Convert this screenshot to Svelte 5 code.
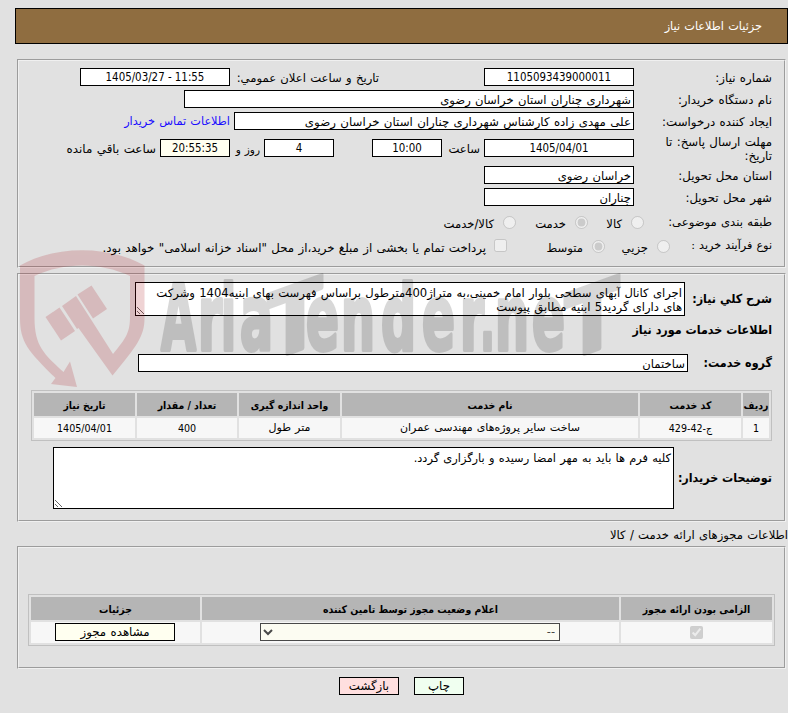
<script lang="ts">
	const services = [
		{
			row: "1",
			code: "ج-42-429",
			name: "ساخت سایر پروژه‌های مهندسی عمران",
			unit: "متر طول",
			amount: "400",
			date: "1405/04/01",
		},
	];

	let description = $state(
		"اجرای کانال آبهای سطحی بلوار امام خمینی،به متراژ400مترطول براساس فهرست بهای ابنیه1404 وشرکت\nهای دارای گردید5 ابنیه مطابق پیوست",
	);
	let buyerNotes = $state(
		"کلیه فرم ها باید به مهر امضا رسیده و بارگزاری گردد.",
	);

	// left edge and width of every letter of the watermark
	const letters = [
		["A", 161, 35],
		["r", 198, 24],
		["i", 221, 15],
		["a", 240, 33],
		["e", 306, 33],
		["n", 341, 34],
		["d", 381, 35],
		["e", 422, 33],
		["r", 460, 24],
		[".", 480, 15],
		["n", 495, 34],
		["e", 532, 33],
	] as const;
</script>

<div class="page" dir="rtl">
	<header>جزئیات اطلاعات نیاز</header>

	<fieldset class="need">
		<div class="row">
			<label for="number">شماره نیاز:</label>
			<input id="number" class="num w150" value="1105093439000011" readonly />
			<span class="text announce">تاریخ و ساعت اعلان عمومي:</span>
			<input class="num w150" value="1405/03/27 - 11:55" readonly dir="ltr" />
		</div>
		<div class="row">
			<label for="buyer">نام دستگاه خریدار:</label>
			<input id="buyer" class="w450" value="شهرداری چناران استان خراسان رضوی" readonly />
		</div>
		<div class="row">
			<label for="creator">ایجاد کننده درخواست:</label>
			<input
				id="creator"
				class="w400"
				value="علی مهدی زاده کارشناس شهرداری چناران استان خراسان رضوی"
				readonly
			/>
			<a href="#contact">اطلاعات تماس خریدار</a>
		</div>
		<div class="row deadline">
			<label for="deadline">مهلت ارسال پاسخ: تا تاریخ:</label>
			<input id="deadline" class="num w150" value="1405/04/01" readonly />
			<span class="text hour">ساعت</span>
			<input class="num w70" value="10:00" readonly />
			<input class="num w70 days" value="4" readonly />
			<span class="text and">روز و</span>
			<input class="num w70 timer" value="20:55:35" readonly />
			<span class="text left">ساعت باقي مانده</span>
		</div>
		<div class="row">
			<label for="province">استان محل تحویل:</label>
			<input id="province" class="w150" value="خراسان رضوی" readonly />
		</div>
		<div class="row">
			<label for="city">شهر محل تحویل:</label>
			<input id="city" class="w150" value="چناران" readonly />
		</div>
		<div class="row options subject">
			<span class="label">طبقه بندی موضوعی:</span>
			<input type="radio" name="subject" disabled />
			<span class="opt goods">کالا</span>
			<input type="radio" name="subject" checked disabled />
			<span class="opt service">خدمت</span>
			<input type="radio" name="subject" disabled />
			<span class="opt">کالا/خدمت</span>
		</div>
		<div class="row options process">
			<span class="label">نوع فرآیند خرید :</span>
			<input type="radio" name="process" disabled />
			<span class="opt small">جزیي</span>
			<input type="radio" name="process" checked disabled />
			<span class="opt medium">متوسط</span>
			<input type="checkbox" disabled />
			<span class="opt treasury">
				پرداخت تمام یا بخشی از مبلغ خرید،از محل "اسناد خزانه اسلامی" خواهد بود.
			</span>
		</div>
	</fieldset>

	<fieldset class="details">
		<div class="field">
			<label for="description">شرح کلي نیاز:</label>
			<textarea id="description" class="description" bind:value={description}></textarea>
		</div>
		<h2>اطلاعات خدمات مورد نیاز</h2>
		<div class="field group">
			<label for="group">گروه خدمت:</label>
			<input id="group" value="ساختمان" readonly />
		</div>
		<table class="services">
			<colgroup>
				<col class="c-row" />
				<col class="c-code" />
				<col />
				<col class="c-unit" />
				<col class="c-amount" />
				<col class="c-date" />
			</colgroup>
			<thead>
				<tr>
					<th>ردیف</th>
					<th>کد خدمت</th>
					<th>نام خدمت</th>
					<th>واحد اندازه گیری</th>
					<th>تعداد / مقدار</th>
					<th>تاریخ نیاز</th>
				</tr>
			</thead>
			<tbody>
				{#each services as s}
					<tr>
						<td class="num">{s.row}</td>
						<td class="num">{s.code}</td>
						<td>{s.name}</td>
						<td>{s.unit}</td>
						<td class="num">{s.amount}</td>
						<td class="num">{s.date}</td>
					</tr>
				{/each}
			</tbody>
		</table>
		<div class="field notes">
			<label for="notes">توضیحات خریدار:</label>
			<textarea id="notes" bind:value={buyerNotes}></textarea>
		</div>
	</fieldset>

	<p class="caption">اطلاعات مجوزهای ارائه خدمت / کالا</p>

	<fieldset class="permits">
		<table>
			<colgroup>
				<col class="c-required" />
				<col />
				<col class="c-view" />
			</colgroup>
			<thead>
				<tr>
					<th>الزامی بودن ارائه مجوز</th>
					<th>اعلام وضعیت مجوز توسط تامین کننده</th>
					<th>جزئیات</th>
				</tr>
			</thead>
			<tbody>
				<tr>
					<td><input type="checkbox" checked disabled /></td>
					<td>
						<select disabled>
							<option>--</option>
						</select>
					</td>
					<td><button class="view">مشاهده مجوز</button></td>
				</tr>
			</tbody>
		</table>
	</fieldset>

	<div class="actions">
		<button class="print">چاپ</button>
		<button class="back">بازگشت</button>
	</div>

	<svg class="watermark" width="788" height="713" viewBox="0 0 788 713" aria-hidden="true">
		<g class="shield">
			<path
				d="M20 265.500C56 245 108 245 144.500 265.500V318C144.500 336 137 346 112.500 375.500L78.500 328L77 329L62 306L76 296L92 321L113 354C127 337 130 332 130 316V276C100 262 64 262 34.500 276V318C34.500 346 44 354 63.500 372L70 361.500L77 387L51 384L55.500 378C28 351 20 342 20 318Z"
			/>
			<path d="M45.500 317L59.500 307.500L75 331L61 340.500ZM77.500 294.500L91.500 285.500L107 309L93 318.500Z" />
		</g>
		<g class="brand">
			{#each letters as [ch, x, w]}
				<text {x} y="350" textLength={w} lengthAdjust="spacingAndGlyphs">{ch}</text>
			{/each}
			<text transform="translate(268 361) skewY(-20)" textLength="54" lengthAdjust="spacingAndGlyphs">T</text>
			<text transform="translate(565 361) skewY(-20)" textLength="54" lengthAdjust="spacingAndGlyphs">T</text>
		</g>
	</svg>
</div>

<style>
	:global(body) {
		background: #e1e1e1;
	}

	.page {
		position: relative;
		box-sizing: border-box;
		width: 788px;
		height: 713px;
		padding-top: 8px;
		overflow: hidden;
		background: #e1e1e1;
		color: #000;
		font: 11.6px/14px "DejaVu Sans", sans-serif;
		word-spacing: 0.6px;
	}

	header {
		box-sizing: border-box;
		height: 36px;
		margin-left: 15px;
		padding-right: 25px;
		border: 1px solid #000;
		background: #8f6d40;
		color: #fff;
		font-size: 11.3px;
		line-height: 36px;
	}

	fieldset {
		box-sizing: border-box;
		width: 769px;
		margin: 0 2px 0 0;
		padding: 0 12px 0 0;
		border: 2px groove #f0f0f0;
	}

	input,
	textarea,
	select,
	button {
		box-sizing: border-box;
		margin: 0;
		border: 1px solid #000;
		border-radius: 0;
		background: #fff;
		color: #000;
		font: inherit;
		word-spacing: inherit;
	}
	input:not([type]) {
		height: 18px;
		padding: 2px 2px 0;
	}
	input[type="radio"],
	input[type="checkbox"] {
		flex: none;
		width: 13px;
		height: 13px;
	}
	input.num {
		padding: 1px 2px;
		font-family: "DejaVu Sans Condensed", "DejaVu Sans", sans-serif;
		font-size: 11.4px;
		text-align: center;
		word-spacing: 0;
	}

	.need {
		height: 209px;
		margin-top: 15px;
		padding-top: 7px;
	}
	.row {
		display: flex;
		align-items: center;
		height: 18px;
		margin-bottom: 4px;
		white-space: nowrap;
	}
	.row label,
	.label {
		flex: none;
		width: 138px;
	}
	.row > label {
		font-size: 11.8px;
	}
	.row > label,
	.row > a,
	.text {
		padding-top: 1px;
	}
	.row.deadline {
		height: 28px;
		margin: 5px 0 3px;
	}
	.deadline label {
		box-sizing: border-box;
		padding: 0 0 0 22px;
		white-space: normal;
	}
	.deadline input,
	.deadline .text {
		margin-bottom: 2px;
	}
	.w70 {
		width: 70px;
	}
	.w150 {
		width: 150px;
	}
	.w400 {
		width: 400px;
	}
	#creator {
		font-size: 11.8px;
	}
	.w450 {
		width: 450px;
	}
	.text {
		flex: none;
	}
	.announce {
		width: 149px;
		margin-right: 105px;
	}
	.hour {
		width: 38px;
		margin-right: 4px;
	}
	.days {
		margin-right: 38px;
	}
	.and {
		width: 30px;
		margin-right: 4px;
		font-size: 10.5px;
	}
	.left {
		margin-right: 4px;
		font-size: 11.9px;
	}
	.timer {
		background: #fffff0;
	}
	a {
		margin-right: 4px;
		color: #1a0dff;
		font-size: 11.3px;
		text-decoration: none;
	}

	.row.options {
		margin: 0;
	}
	.options .label {
		width: 128px;
	}
	.opt {
		position: relative;
		top: 2px;
		flex: none;
		margin-right: 9px;
	}
	.subject {
		padding-top: 3px;
	}
	.goods {
		width: 34px;
	}
	.service {
		width: 50px;
	}
	.process {
		padding-top: 6px;
	}
	.process .label {
		width: 102px;
		font-size: 11.2px;
	}
	.process input[type="checkbox"] {
		margin-bottom: 2px;
	}
	.small {
		width: 43px;
	}
	.medium {
		width: 76px;
	}
	.treasury {
		margin-right: 8px;
		font-size: 11.8px;
	}

	.details {
		height: 249px;
		margin-top: 5px;
		padding-top: 7px;
	}
	.field {
		display: flex;
		align-items: center;
	}
	.field label,
	h2 {
		font-family: "DejaVu Sans Condensed", "DejaVu Sans", sans-serif;
		font-size: 12.4px;
		font-weight: bold;
		white-space: nowrap;
		word-spacing: 0;
	}
	.field label {
		flex: none;
		width: 87px;
	}
	textarea {
		display: block;
		padding: 3px 2px 2px;
		font-size: 11.4px;
		line-height: 14px;
	}
	.description {
		width: 550px;
		height: 34px;
		overflow: hidden;
		font-size: 11.6px;
		word-spacing: 0.6px;
	}
	h2 {
		margin: 7px 0 17px;
		line-height: 14px;
	}
	.group label {
		width: 84px;
	}
	.group input {
		width: 550px;
	}

	table {
		box-sizing: border-box;
		border: 1px solid #c0c0c0;
		border-spacing: 2px;
		table-layout: fixed;
		font-size: 11px;
	}
	th,
	td {
		padding: 0;
		text-align: center;
	}
	th {
		height: 23px;
		background: #b5b5b5;
		font-family: "DejaVu Sans Condensed", "DejaVu Sans", sans-serif;
		font-size: 10.4px;
		word-spacing: 0;
	}
	td {
		height: 20px;
		background: #f7f7f7;
	}
	td.num {
		font-family: "DejaVu Sans Condensed", "DejaVu Sans", sans-serif;
		font-size: 10.6px;
	}
	.services {
		width: 741px;
		margin-top: 18px;
	}
	.c-row {
		width: 26px;
	}
	.c-code,
	.c-unit,
	.c-date {
		width: 101px;
	}
	.c-amount {
		width: 100px;
	}
	.notes {
		margin-top: 6px;
	}
	.notes label {
		width: 98px;
	}
	.notes textarea {
		width: 621px;
		height: 62px;
	}

	.caption {
		height: 14px;
		margin: 6px 0 4px;
	}
	.permits {
		height: 123px;
		padding: 46px 9px 0 0;
	}
	.permits table {
		width: 747px;
	}
	.permits td {
		height: 21px;
		vertical-align: top;
	}
	.c-required {
		width: 151px;
	}
	.c-view {
		width: 169px;
	}
	.permits input {
		display: block;
		margin: 4px auto 0;
	}
	select {
		display: block;
		width: 300px;
		height: 18px;
		margin: 1px 59px 0 0;
		background: #fffff0;
		font-size: 11.4px;
	}
	button {
		height: 18px;
		padding: 0;
		font-size: 11.8px;
		line-height: 17px;
	}
	.view {
		display: block;
		width: 120px;
		margin: 1px 25px 0 0;
		background: #fffff0;
	}

	.actions {
		display: flex;
		gap: 15px;
		margin: 8px 324px 0 0;
	}
	.print {
		width: 50px;
		background: #f0fff0;
	}
	.back {
		width: 60px;
		background: #ffdfdf;
	}

	.watermark {
		position: absolute;
		top: 0;
		left: 0;
		pointer-events: none;
	}
	.shield {
		fill: #a81018;
		opacity: 0.18;
	}
	.brand {
		direction: ltr;
		fill: #000;
		stroke: #000;
		stroke-width: 4;
		stroke-linejoin: round;
		opacity: 0.15;
		font: bold 91px "DejaVu Sans Condensed", "DejaVu Sans", sans-serif;
		word-spacing: 0;
	}
</style>
